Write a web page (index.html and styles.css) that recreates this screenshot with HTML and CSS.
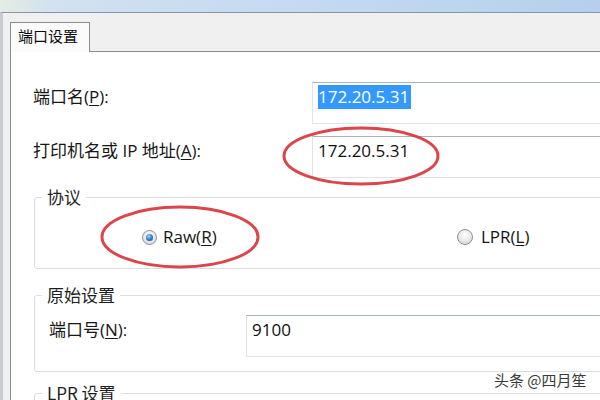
FILE: index.html
```html
<!DOCTYPE html>
<html lang="zh-CN">
<head>
<meta charset="utf-8">
<title>端口设置</title>
<link rel="stylesheet" href="styles.css">
</head>
<body>
<div class="titlebar"></div>
<div class="window">
  <div class="tabstrip">
    <div class="tab">端口设置</div>
    <div class="tabfill"></div>
  </div>
  <div class="panel">
    <div class="row">
      <div class="label">端口名(<u>P</u>):</div>
      <div class="textbox"><span class="sel">172.20.5.31</span></div>
    </div>
    <div class="row row2">
      <div class="label">打印机名或 IP 地址(<u>A</u>):</div>
      <div class="textbox">172.20.5.31</div>
    </div>
    <fieldset class="group g1">
      <legend>协议</legend>
      <div class="radios">
        <div class="opt opt-raw"><span class="radio on"></span>Raw(<u>R</u>)</div>
        <div class="opt opt-lpr"><span class="radio"></span>LPR(<u>L</u>)</div>
      </div>
    </fieldset>
    <fieldset class="group g2">
      <legend>原始设置</legend>
      <div class="row inner">
        <div class="label label-n">端口号(<u>N</u>):</div>
        <div class="textbox">9100</div>
      </div>
    </fieldset>
    <fieldset class="group g3">
      <legend>LPR 设置</legend>
      <div class="g3body"></div>
    </fieldset>
  </div>
</div>
<svg class="marks" width="600" height="400" viewBox="0 0 600 400">
  <ellipse cx="361" cy="156" rx="77" ry="28" />
  <ellipse cx="180" cy="237" rx="78" ry="30" />
</svg>
<div class="watermark">头条 @四月笙</div>
</body>
</html>
```

FILE: styles.css
```css
html, body {
  margin: 0;
  width: 600px;
  height: 400px;
  overflow: hidden;
}
body {
  position: relative;
  background: #f0f0f0;
  font-family: "Open Sans", "Noto Sans CJK SC", sans-serif;
  font-size: 17px;
  color: #161616;
}
u {
  text-decoration: underline;
  text-underline-offset: 2px;
  text-decoration-thickness: 1px;
}
.titlebar {
  height: 12px;
  background: linear-gradient(90deg, #e4ece4 0%, #d2e2ee 8%, #c6dcf1 40%, #bcd6ef 75%, #b4d0ed 100%);
}
.window {
  box-sizing: border-box;
  border-top: 1px solid #8796a6;
  border-left: 3px solid #c7cbd0;
  padding-left: 7px;
  background: #f0f0f0;
  height: 388px;
  overflow: hidden;
}
.tabstrip {
  display: flex;
  align-items: flex-end;
  height: 39px;
}
.tab {
  width: 71px;
  height: 26px;
  padding: 3px 0 0 7px;
  border: 1px solid #898c95;
  border-bottom: none;
  background: #fbfbfb;
  font-family: "Noto Sans CJK SC", sans-serif;
  font-size: 15px;
  line-height: 20px;
  color: #0c0c0c;
}
.tabfill {
  flex: 1;
  border-bottom: 1px solid #898c95;
}
.panel {
  box-sizing: border-box;
  background: #fff;
  border-left: 1px solid #898c95;
  padding: 30px 0 0 22px;
  height: 348px;
  overflow: hidden;
}
.row {
  display: flex;
  align-items: flex-start;
  height: 42px;
}
.row2 {
  margin-top: 12px;
}
.label {
  width: 279px;
  flex: none;
  margin-top: 3px;
  line-height: 24px;
}
.textbox {
  box-sizing: border-box;
  width: 400px;
  height: 42px;
  flex: none;
  padding: 2px 5px;
  line-height: 24px;
  border: 1px solid #e0e4ea;
  border-top-color: #a9b1bc;
  color: #0f0f0f;
  background: #fff;
}
.sel {
  display: inline-block;
  background: #3399ff;
  color: #fff;
  padding-right: 2px;
}
.group {
  box-sizing: border-box;
  width: 700px;
  margin: 9px 0 0 1px;
  padding: 0;
  border: 1px solid #d9dee2;
  border-radius: 3px;
  min-width: 0;
}
.group legend {
  margin-left: 7px;
  padding: 0 5px;
  line-height: 20px;
  font-family: "Noto Sans CJK SC", sans-serif;
  color: #1e1e1e;
}
.radios {
  display: flex;
  align-items: center;
  height: 24px;
  padding: 18px 0 19px 107px;
}
.opt {
  display: flex;
  align-items: center;
  line-height: 24px;
}
.opt-raw {
  width: 315px;
  flex: none;
}
.radio {
  box-sizing: border-box;
  width: 15px;
  height: 15px;
  border-radius: 50%;
  border: 1px solid #8e9094;
  background: radial-gradient(circle at 50% 35%, #ffffff 0%, #e6e7e9 55%, #c9cbce 100%);
  margin-right: 6px;
  display: flex;
  align-items: center;
  justify-content: center;
  flex: none;
}
.opt-lpr .radio {
  width: 16px;
  height: 16px;
  margin-right: 8px;
}
.radio.on::after {
  content: "";
  width: 7px;
  height: 7px;
  border-radius: 50%;
  background: radial-gradient(circle at 40% 35%, #a6d6ff 0%, #2b7fd0 50%, #0d3f7c 100%);
}
.g2 {
  margin-top: 16px;
}
.inner {
  padding: 10px 0 14px 14px;
}
.label-n {
  width: 197px;
}
.g3 {
  margin-top: 11px;
}
.g3body {
  height: 40px;
}
.marks {
  position: absolute;
  left: 0;
  top: 0;
  pointer-events: none;
}
.marks ellipse {
  fill: none;
  stroke: #d8363d;
  stroke-width: 3;
  opacity: 0.92;
}
.watermark {
  position: absolute;
  left: 494px;
  top: 370px;
  font-family: "Noto Sans CJK SC", sans-serif;
  font-size: 15px;
  line-height: 20px;
  color: #3a3a3a;
  text-shadow: 0 0 2px #fff, 0 0 2px #fff;
}
```
